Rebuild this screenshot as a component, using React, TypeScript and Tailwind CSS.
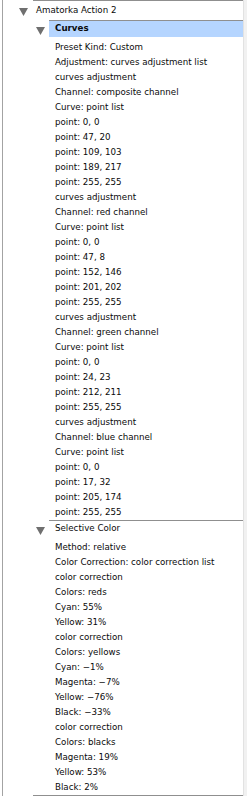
import React from 'react';

const curvesRows = [
  'Preset Kind: Custom',
  'Adjustment: curves adjustment list',
  'curves adjustment',
  'Channel: composite channel',
  'Curve: point list',
  'point: 0, 0',
  'point: 47, 20',
  'point: 109, 103',
  'point: 189, 217',
  'point: 255, 255',
  'curves adjustment',
  'Channel: red channel',
  'Curve: point list',
  'point: 0, 0',
  'point: 47, 8',
  'point: 152, 146',
  'point: 201, 202',
  'point: 255, 255',
  'curves adjustment',
  'Channel: green channel',
  'Curve: point list',
  'point: 0, 0',
  'point: 24, 23',
  'point: 212, 211',
  'point: 255, 255',
  'curves adjustment',
  'Channel: blue channel',
  'Curve: point list',
  'point: 0, 0',
  'point: 17, 32',
  'point: 205, 174',
  'point: 255, 255',
];

const selectiveRows = [
  'Method: relative',
  'Color Correction: color correction list',
  'color correction',
  'Colors: reds',
  'Cyan: 55%',
  'Yellow: 31%',
  'color correction',
  'Colors: yellows',
  'Cyan: −1%',
  'Magenta: −7%',
  'Yellow: −76%',
  'Black: −33%',
  'color correction',
  'Colors: blacks',
  'Magenta: 19%',
  'Yellow: 53%',
  'Black: 2%',
];

const Disclosure: React.FC = () => (
  <svg width="9" height="8" viewBox="0 0 9 8">
    <polygon points="0,0 9,0 4.5,8" fill="#6f6f6f" />
  </svg>
);

interface StepProps {
  title: string;
  rows: string[];
  selected?: boolean;
}

const Step: React.FC<StepProps> = ({ title, rows, selected }) => (
  <div className="flex">
    <div className="w-[16px] shrink-0 pl-[3px] pt-[7px]">
      <Disclosure />
    </div>
    <div className="flex-1 border-t border-[#8f8f8f]">
      <div className={`h-[16px] flex items-center pl-[6px] ${selected ? 'bg-[#b5d5ff] font-bold' : ''}`}>
        {title}
      </div>
      <div className="pt-[3px]">
        {rows.map((r, i) => (
          <div key={i} className="h-[15px] flex items-center pl-[6px] whitespace-nowrap">
            {r}
          </div>
        ))}
      </div>
    </div>
  </div>
);

export default function App() {
  return (
    <div
      className="w-[247px] h-[796px] flex bg-white text-[8.7px] text-[#0a0a0a] overflow-hidden"
      style={{ fontFamily: '"DejaVu Sans", sans-serif' }}
    >
      <div className="ml-[2px] border-l border-[#a3a3a3] flex-1 flex flex-col">
        <div className="flex">
          <div className="w-[30px] shrink-0 pl-[16px] pt-[8px]">
            <Disclosure />
          </div>
          <div className="flex-1 flex flex-col">
            <div className="h-[20px] border-t border-[#8f8f8f] flex items-center pl-[3px]">
              Amatorka Action 2
            </div>
            <Step title="Curves" rows={curvesRows} selected />
            <Step title="Selective Color" rows={selectiveRows} />
          </div>
        </div>
        <div className="ml-[30px] border-t border-[#8f8f8f]" />
      </div>
      <div className="w-[4px] shrink-0 bg-[#f1f1f1] border-l border-[#e2e2e2]" />
    </div>
  );
}
